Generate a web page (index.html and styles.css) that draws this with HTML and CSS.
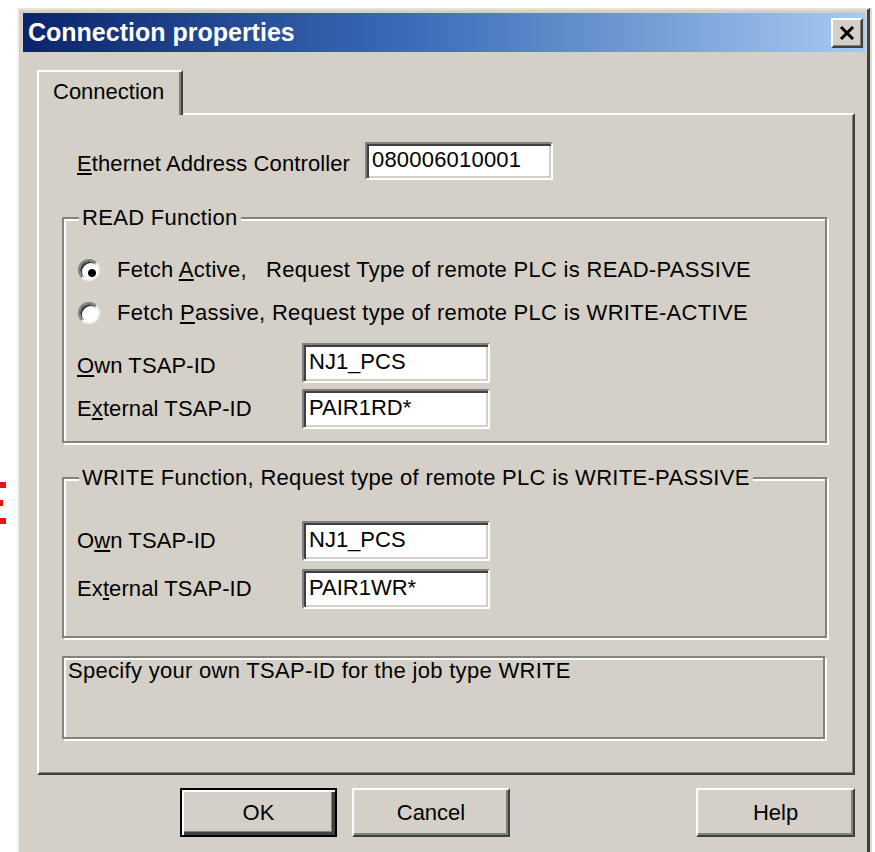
FILE: index.html
```html
<!DOCTYPE html>
<html lang="en">
<head>
<meta charset="utf-8">
<title>Connection properties</title>
<link rel="stylesheet" href="styles.css">
</head>
<body>
<div class="marker">
  <span class="mk mk-1"></span>
  <span class="mk mk-2"></span>
  <span class="mk mk-3"></span>
</div>

<div class="window">
  <div class="titlebar">
    <span class="title">Connection properties</span>
    <button class="close" type="button" aria-label="Close">
      <svg width="16" height="14" viewBox="0 0 16 14"><path d="M2 1 L14 13 M14 1 L2 13" stroke="#000" stroke-width="3"/></svg>
    </button>
  </div>

  <div class="body">
    <div class="tabs">
      <div class="tab">Connection</div>
    </div>
    <div class="panel">
      <div class="addr-row">
        <span class="addr-label"><u>E</u>thernet Address Controller</span>
        <span class="field addr-field">080006010001</span>
      </div>

      <fieldset class="group read-group">
        <legend>READ Function</legend>
        <div class="radio-row">
          <span class="radio checked"></span>
          <span>Fetch <u>A</u>ctive,&nbsp;&nbsp; Request Type of remote PLC is READ-PASSIVE</span>
        </div>
        <div class="radio-row">
          <span class="radio"></span>
          <span>Fetch <u>P</u>assive, Request type of remote PLC is WRITE-ACTIVE</span>
        </div>
        <div class="tsap-row first">
          <span class="tsap-label low"><u>O</u>wn TSAP-ID</span>
          <span class="field tsap-field">NJ1_PCS</span>
        </div>
        <div class="tsap-row">
          <span class="tsap-label">E<u>x</u>ternal TSAP-ID</span>
          <span class="field tsap-field">PAIR1RD*</span>
        </div>
      </fieldset>

      <fieldset class="group write-group">
        <legend>WRITE Function, Request type of remote PLC is WRITE-PASSIVE</legend>
        <div class="tsap-row">
          <span class="tsap-label">O<u>w</u>n TSAP-ID</span>
          <span class="field tsap-field">NJ1_PCS</span>
        </div>
        <div class="tsap-row second">
          <span class="tsap-label">Ex<u>t</u>ernal TSAP-ID</span>
          <span class="field tsap-field">PAIR1WR*</span>
        </div>
      </fieldset>

      <div class="hint">Specify your own TSAP-ID for the job type WRITE</div>
    </div>

    <div class="buttons">
      <button class="btn default" type="button">OK</button>
      <button class="btn" type="button">Cancel</button>
      <button class="btn help" type="button">Help</button>
    </div>
  </div>
</div>
</body>
</html>
```
FILE: styles.css
```css
html, body {
  margin: 0;
  padding: 0;
  background: #ffffff;
}

body {
  width: 875px;
  height: 852px;
  overflow: hidden;
  font-family: "Liberation Sans", Arial, sans-serif;
  font-size: 22px;
  letter-spacing: 0.3px;
  color: #000;
}

/* red annotation ticks at the left edge */
.marker {
  position: absolute;
  left: 0;
  top: 482px;
}
.mk {
  position: absolute;
  left: 0;
  height: 6px;
  background: #ee1111;
}
.mk-1 { top: 0; width: 6px; }
.mk-2 { top: 18px; width: 3px; }
.mk-3 { top: 36px; width: 6px; }

/* dialog frame */
.window {
  box-sizing: border-box;
  margin: 8px 0 0 17px;
  width: 853px;
  height: 844px;
  background: #d4d0c8;
  border-left: 2px solid #f2f0ec;
  border-top: 2px solid #e6e3dd;
  border-right: 3px solid #404040;
  padding: 3px 2px 0 4px;
  box-shadow: 2px 0 0 #dedbd4;
}

.titlebar {
  height: 39px;
  display: flex;
  align-items: center;
  justify-content: space-between;
  background: linear-gradient(to right, #0a246a 0%, #3a6ab8 45%, #a6caf0 100%);
  padding: 0 2px 0 5px;
}
.title {
  color: #fff;
  font-weight: bold;
  font-size: 25px;
  letter-spacing: 0;
}
.close {
  box-sizing: border-box;
  width: 32px;
  height: 30px;
  padding: 0;
  display: flex;
  align-items: center;
  justify-content: center;
  background: #d4d0c8;
  border: 2px solid;
  border-color: #fff #404040 #404040 #fff;
  box-shadow: inset -1px -1px 0 #808080;
}

.body {
  margin-left: 14px;
  width: 818px;
}

/* tab strip */
.tabs {
  margin-top: 18px;
  display: flex;
}
.tab {
  position: relative;
  z-index: 1;
  box-sizing: border-box;
  width: 146px;
  height: 45px;
  margin-bottom: -2px;
  padding: 8px 0 0 14px;
  background: #d4d0c8;
  border-top: 2px solid #fff;
  border-left: 2px solid #fff;
  border-right: 2px solid #404040;
  box-shadow: inset -2px 0 0 #808080;
  line-height: 24px;
  letter-spacing: 0;
}

.panel {
  box-sizing: border-box;
  height: 662px;
  border-top: 2px solid #fff;
  border-left: 2px solid #fff;
  border-right: 2px solid #404040;
  border-bottom: 2px solid #404040;
  box-shadow: inset -1px -1px 0 #808080;
  padding: 27px 28px 0 23px;
}

.addr-row {
  display: flex;
  align-items: center;
  margin-left: 15px;
}
.addr-label {
  width: 288px;
  padding-top: 5px;
  letter-spacing: 0.1px;
}

/* sunken edit box */
.field {
  box-sizing: border-box;
  display: flex;
  align-items: center;
  height: 40px;
  background: #fff;
  border: 2px solid;
  border-color: #808080 #fff #fff #808080;
  box-shadow: inset 2px 2px 0 #404040, inset -2px -2px 0 #d4d0c8;
  padding: 0 0 2px 5px;
  white-space: nowrap;
  letter-spacing: 0;
}
.addr-field {
  width: 188px;
  height: 38px;
  letter-spacing: 0.2px;
}
.tsap-field {
  width: 188px;
}

/* etched group boxes */
.group {
  margin: 0;
  min-inline-size: 0;
  border: 2px solid #85827c;
  box-shadow: 2px 2px 0 #fff, inset 2px 2px 0 #fff;
  padding: 0 0 0 13px;
  width: 765px;
  box-sizing: border-box;
}
.group legend {
  padding: 0 3px;
  margin-left: 2px;
  line-height: 24px;
  background: #d4d0c8;
}

.read-group {
  margin-top: 26px;
  padding-top: 18px;
  padding-bottom: 12px;
}
.write-group {
  margin-top: 23px;
  padding-top: 25px;
  padding-bottom: 27px;
}

.radio-row {
  display: flex;
  align-items: center;
  height: 43px;
  gap: 17px;
  padding-left: 1px;
}
.radio {
  box-sizing: border-box;
  flex: none;
  width: 22px;
  height: 22px;
  border-radius: 50%;
  border: 2px solid;
  border-color: #808080 #f4f2ee #f4f2ee #808080;
  background: #fff;
  box-shadow: inset 2px 2px 0 #404040;
}
.radio.checked {
  background: radial-gradient(circle at 12px 12px, #000 0 3.5px, #fff 4.5px);
}

.tsap-row {
  display: flex;
  align-items: center;
  margin-top: 6px;
}
.tsap-row.first {
  margin-top: 9px;
}
.tsap-row.second {
  margin-top: 8px;
}
.tsap-label {
  width: 225px;
  letter-spacing: 0.1px;
}
.tsap-label.low {
  padding-top: 6px;
}

.hint {
  box-sizing: border-box;
  width: 763px;
  height: 83px;
  margin-top: 18px;
  border: 2px solid #85827c;
  box-shadow: 2px 2px 0 #fff, inset 2px 2px 0 #fff;
  padding: 1px 0 0 4px;
  line-height: 24px;
}

/* dialog buttons */
.buttons {
  display: flex;
  gap: 15px;
  margin-top: 13px;
  padding-left: 143px;
}
.btn {
  box-sizing: border-box;
  width: 158px;
  height: 49px;
  padding: 0;
  font-family: "Liberation Sans", Arial, sans-serif;
  font-size: 22px;
  color: #000;
  background: #d4d0c8;
  border: 2px solid;
  border-color: #fff #404040 #404040 #fff;
  box-shadow: inset -2px -2px 0 #808080;
}
.btn.default {
  width: 157px;
  border: 2px solid #000;
  box-shadow: inset 2px 2px 0 #fff, inset -3px -3px 0 #404040, inset -4px -4px 0 #808080;
}
.btn.help {
  margin-left: auto;
  width: 159px;
}
```
